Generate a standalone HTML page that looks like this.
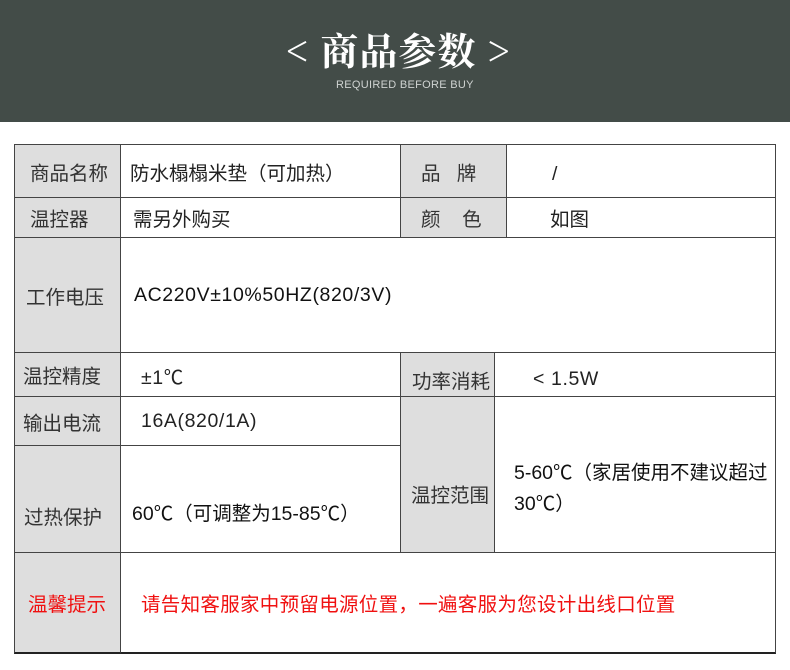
<!DOCTYPE html><html><head><meta charset="utf-8"><style>
*{margin:0;padding:0;box-sizing:border-box}
body{width:790px;height:670px;background:#fff;position:relative;overflow:hidden;font-family:"Liberation Sans","Noto Sans CJK SC",sans-serif;color:#222}
.hd{position:absolute;left:0;top:0;width:790px;height:122px;background:#434c48}
.t{position:absolute;white-space:nowrap}
.c{position:absolute;border:1px solid #444;display:flex;align-items:center;font-size:19.5px;white-space:nowrap}
.g{background:#dedede;color:#333}
.l{letter-spacing:0.6px}
</style></head><body>
<div class="hd"></div>
<div class="t" style="left:286px;top:21px;font-size:38px;color:#fff;font-family:'Noto Serif CJK SC',serif;font-weight:bold;letter-spacing:1px">&lt; 商品参数 &gt;</div>
<div class="t" style="left:336px;top:79px;font-size:11px;color:#cfd3d1;letter-spacing:0.3px">REQUIRED BEFORE BUY</div>

<div class="c g" style="left:14px;top:144px;width:107px;height:54px;padding-left:15px">商品名称</div>
<div class="c" style="left:120px;top:144px;width:281px;height:54px;padding-left:9px">防水榻榻米垫（可加热）</div>
<div class="c g" style="left:400px;top:144px;width:107px;height:54px;padding-left:20px">品&nbsp;&nbsp;&nbsp;牌</div>
<div class="c" style="left:506px;top:144px;width:270px;height:54px;padding-left:45px;padding-top:6px">/</div>

<div class="c g" style="left:14px;top:197px;width:107px;height:41px;padding-left:15px">温控器</div>
<div class="c" style="left:120px;top:197px;width:281px;height:41px;padding-left:12px">需另外购买</div>
<div class="c g" style="left:400px;top:197px;width:107px;height:41px;padding-left:20px">颜&nbsp;&nbsp;&nbsp;&nbsp;色</div>
<div class="c" style="left:506px;top:197px;width:270px;height:41px;padding-left:43px">如图</div>

<div class="c g" style="left:14px;top:237px;width:107px;height:116px;padding-left:11px">工作电压</div>
<div class="c l" style="left:120px;top:237px;width:656px;height:116px;padding-left:13px;color:#111">AC220V±10%50HZ(820/3V)</div>

<div class="c g" style="left:14px;top:352px;width:107px;height:45px;padding-left:8px">温控精度</div>
<div class="c l" style="left:120px;top:352px;width:281px;height:45px;padding-left:20px;align-items:flex-start;padding-top:8px">±1℃</div>
<div class="c g" style="left:400px;top:352px;width:95px;height:45px;padding-left:11px;padding-top:10px">功率消耗</div>
<div class="c l" style="left:494px;top:352px;width:282px;height:45px;padding-left:38px;padding-top:10px">&lt; 1.5W</div>

<div class="c g" style="left:14px;top:396px;width:107px;height:50px;padding-left:8px">输出电流</div>
<div class="c l" style="left:120px;top:396px;width:281px;height:50px;padding-left:20px">16A(820/1A)</div>
<div class="c g" style="left:14px;top:445px;width:107px;height:108px;padding-left:9px;padding-top:32px">过热保护</div>
<div class="c" style="left:120px;top:445px;width:281px;height:108px;padding-left:11px;padding-top:24px;color:#111">60℃（可调整为15-85℃）</div>
<div class="c g" style="left:400px;top:396px;width:95px;height:157px;padding-left:10px;padding-top:38px">温控范围</div>
<div class="c" style="left:494px;top:396px;width:282px;height:157px;padding-left:19px;padding-top:28px;white-space:normal;line-height:31px;color:#111">5-60℃（家居使用不建议超过30℃）</div>

<div class="c g" style="left:14px;top:552px;width:107px;height:102px;padding-left:13px;color:#f01010;border-bottom:2px solid #222">温馨提示</div>
<div class="c" style="left:120px;top:552px;width:656px;height:102px;padding-left:20px;color:#f01010;border-bottom:2px solid #222;letter-spacing:0.3px">请告知客服家中预留电源位置，一遍客服为您设计出线口位置</div>
</body></html>
